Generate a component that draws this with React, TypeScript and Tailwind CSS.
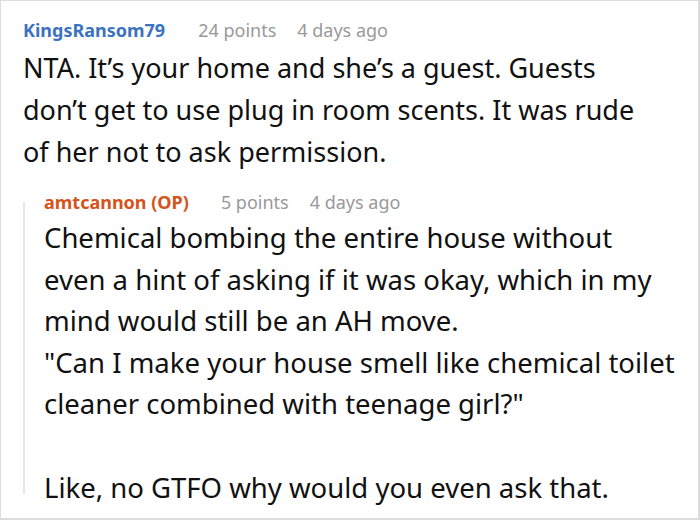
import React from "react";

const font = { fontFamily: '"Noto Sans", "Open Sans", sans-serif' };

function Header({ name, color, points, gap }: { name: string; color: string; points: string; gap: string }) {
  return (
    <div className="flex items-baseline text-[18px] leading-[24px] whitespace-nowrap">
      <span className={`font-bold ${color}`}>{name}</span>
      <span className={`${gap} text-[#999999]`}>{points}</span>
      <span className="ml-[21px] text-[#999999]">4 days ago</span>
    </div>
  );
}

export default function App() {
  return (
    <div style={font} className="w-[700px] h-[520px] bg-white border border-[#dcdcdc] border-r-2 border-b-2 box-border overflow-hidden">
      <div className="pl-[22px] pt-[17px]">
        <Header name="KingsRansom79" color="text-[#3b73c0]" points="24 points" gap="ml-[33px]" />
        <div className="mt-[5px] text-[27px] leading-[42px] text-[#111111] whitespace-nowrap">
          <div>NTA. It’s your home and she’s a guest. Guests</div>
          <div>don’t get to use plug in room scents. It was rude</div>
          <div>of her not to ask permission.</div>
        </div>
        <div className="mt-[17px] flex">
          <div className="w-[2px] bg-[#e6e6e6] mt-[12px] mb-[14px]" />
          <div className="pl-[19px]">
            <Header name="amtcannon (OP)" color="text-[#d4541c]" points="5 points" gap="ml-[32px]" />
            <div className="mt-[3px] text-[27.5px] leading-[41.6px] text-[#111111] whitespace-nowrap">
              <div>Chemical bombing the entire house without</div>
              <div>even a hint of asking if it was okay, which in my</div>
              <div>mind would still be an AH move.</div>
              <div>"Can I make your house smell like chemical toilet</div>
              <div>cleaner combined with teenage girl?"</div>
              <div>&nbsp;</div>
              <div>Like, no GTFO why would you even ask that.</div>
            </div>
          </div>
        </div>
      </div>
    </div>
  );
}
